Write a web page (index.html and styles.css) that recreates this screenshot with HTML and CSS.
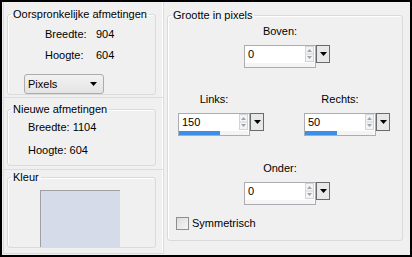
FILE: index.html
```html
<!DOCTYPE html>
<html>
<head>
<meta charset="utf-8">
<link rel="stylesheet" href="styles.css">
</head>
<body>
<div class="dialog">
  <div class="left">
    <div class="panel p1">
      <fieldset class="group g1">
        <legend>Oorspronkelijke afmetingen</legend>
        <div class="dims">
          <span>Breedte:</span><span>904</span>
          <span>Hoogte:</span><span>604</span>
        </div>
        <div class="combo"><span>Pixels</span>
          <svg width="7" height="4" viewBox="0 0 7 4"><path d="M0 0h7L3.5 4z" fill="#000"/></svg>
        </div>
      </fieldset>
    </div>
    <div class="panel p2">
      <fieldset class="group g2">
        <legend>Nieuwe afmetingen</legend>
        <div class="line l1">Breedte: 1104</div>
        <div class="line l2">Hoogte: 604</div>
      </fieldset>
    </div>
    <div class="panel p3">
      <fieldset class="group g3">
        <legend>Kleur</legend>
        <div class="swatch"></div>
      </fieldset>
    </div>
  </div>
  <div class="right">
    <fieldset class="group g4">
      <legend>Grootte in pixels</legend>
      <div class="cell boven">
        <div class="lbl">Boven:</div>
        <div class="spin">
          <div class="field">
            <div class="top"><span class="val">0</span>
              <span class="arrows"><svg width="9" height="16" viewBox="0 0 9 16"><rect x="0.5" y="0.5" width="8" height="15" fill="#f4f4f4" stroke="#d4d4d4"/><path d="M2 6h5L4.5 3z M2 10h5l-2.5 3z" fill="#9aa6b4"/><path d="M1 8h7" stroke="#d4d4d4"/></svg></span>
            </div>
            <div class="bar"></div>
          </div>
          <div class="drop"><svg width="7" height="4" viewBox="0 0 7 4"><path d="M0 0h7L3.5 4z" fill="#000"/></svg></div>
        </div>
      </div>
      <div class="pair">
        <div class="cell">
          <div class="lbl">Links:</div>
          <div class="spin">
            <div class="field">
              <div class="top"><span class="val">150</span>
                <span class="arrows"><svg width="9" height="16" viewBox="0 0 9 16"><rect x="0.5" y="0.5" width="8" height="15" fill="#f4f4f4" stroke="#d4d4d4"/><path d="M2 6h5L4.5 3z M2 10h5l-2.5 3z" fill="#9aa6b4"/><path d="M1 8h7" stroke="#d4d4d4"/></svg></span>
              </div>
              <div class="bar"><div class="fill" style="width:41px"></div></div>
            </div>
            <div class="drop"><svg width="7" height="4" viewBox="0 0 7 4"><path d="M0 0h7L3.5 4z" fill="#000"/></svg></div>
          </div>
        </div>
        <div class="cell">
          <div class="lbl">Rechts:</div>
          <div class="spin">
            <div class="field">
              <div class="top"><span class="val">50</span>
                <span class="arrows"><svg width="9" height="16" viewBox="0 0 9 16"><rect x="0.5" y="0.5" width="8" height="15" fill="#f4f4f4" stroke="#d4d4d4"/><path d="M2 6h5L4.5 3z M2 10h5l-2.5 3z" fill="#9aa6b4"/><path d="M1 8h7" stroke="#d4d4d4"/></svg></span>
              </div>
              <div class="bar"><div class="fill" style="width:32px"></div></div>
            </div>
            <div class="drop"><svg width="7" height="4" viewBox="0 0 7 4"><path d="M0 0h7L3.5 4z" fill="#000"/></svg></div>
          </div>
        </div>
      </div>
      <div class="cell onder">
        <div class="lbl">Onder:</div>
        <div class="spin">
          <div class="field">
            <div class="top"><span class="val">0</span>
              <span class="arrows"><svg width="9" height="16" viewBox="0 0 9 16"><rect x="0.5" y="0.5" width="8" height="15" fill="#f4f4f4" stroke="#d4d4d4"/><path d="M2 6h5L4.5 3z M2 10h5l-2.5 3z" fill="#9aa6b4"/><path d="M1 8h7" stroke="#d4d4d4"/></svg></span>
            </div>
            <div class="bar"></div>
          </div>
          <div class="drop"><svg width="7" height="4" viewBox="0 0 7 4"><path d="M0 0h7L3.5 4z" fill="#000"/></svg></div>
        </div>
      </div>
      <label class="check"><span class="box"></span>Symmetrisch</label>
    </fieldset>
  </div>
</div>
</body>
</html>
```
FILE: styles.css
```css
html, body { margin: 0; padding: 0; }
body {
  width: 412px; height: 257px; overflow: hidden;
  font-family: "Liberation Sans", Arial, sans-serif;
  font-size: 11px; color: #000;
}
.dialog {
  width: 412px; height: 257px; box-sizing: border-box;
  border: 2px solid #000; background: #f0f0f0;
  display: flex; padding: 0 2px 1px 1px;
}
.left { width: 161px; display: flex; flex-direction: column; }
.panel {
  box-sizing: border-box;
  border: 1px solid #dcdcdc; border-top: none;
  box-shadow: inset -1px 0 0 #fff;
  padding: 0 7px 0 3px;
}
.p1 { height: 96px; padding-top: 6px; }
.p2 { height: 72px; padding-top: 5px; }
.p3 { flex: 1; padding-top: 1px; }
fieldset.group {
  margin: 0; padding: 0; min-width: 0;
  border: 1px solid #dadada; border-radius: 3px;
  box-shadow: inset 1px 1px 0 #fff;
}
legend { padding: 0 2px; margin-left: 3px; line-height: 13px; }
.g1 { height: 87px; box-sizing: border-box; }
.dims {
  display: grid; grid-template-columns: 51px auto;
  padding-left: 37px; row-gap: 8px; line-height: 13px; margin-top: 7px;
}
.combo {
  margin: 12px 0 0 16px; width: 80px; height: 20px; box-sizing: border-box;
  border: 1px solid #acacac; border-radius: 3px;
  background: linear-gradient(#f2f2f2, #e4e4e4);
  display: flex; align-items: center; justify-content: space-between;
  padding: 0 6px 0 3px;
}
.g2 { height: 63px; box-sizing: border-box; }
.line { line-height: 13px; padding-left: 20px; }
.l1 { margin-top: 5px; }
.l2 { margin-top: 10px; }
.g3 { height: 77px; box-sizing: border-box; }
.swatch {
  width: 80px; height: 57px; margin: 6px 0 0 32px;
  background: #d6dbe9; border-top: 1px solid #a0a0a0; border-left: 1px solid #a0a0a0;
  box-sizing: border-box;
}
.right { flex: 1; padding: 7px 5px 0 3px; box-sizing: border-box; }
.g4 { height: 232px; box-sizing: border-box; }
.cell { display: flex; flex-direction: column; width: 86px; }
.lbl { line-height: 13px; text-align: center; width: 72px; }
.boven { margin: 3px 0 0 76px; }
.spin { display: flex; height: 23px; margin-top: 7px; }
.field {
  width: 72px; box-sizing: border-box; border: 1px solid #abadb3;
  background: #fff; display: flex; flex-direction: column;
}
.top { display: flex; justify-content: space-between; height: 17px; }
.val { padding: 2px 0 0 3px; line-height: 13px; }
.arrows { padding: 0 1px 0 0; display: flex; }
.bar { height: 4px; background: #f4f4f4; margin: 0 1px 0 0; }
.fill { height: 4px; background: #3c8fe8; }
.drop {
  width: 14px; height: 18px; box-sizing: border-box;
  border: 1px solid #6a6a6a; background: #e8e8e8;
  display: flex; align-items: center; justify-content: center;
}
.pair { display: flex; gap: 40px; margin: 25px 0 0 10px; }
.pair .cell { width: 86px; }
.onder { margin: 26px 0 0 76px; }
.check { display: flex; align-items: center; margin: 12px 0 0 8px; line-height: 13px; }
.box {
  width: 13px; height: 13px; box-sizing: border-box;
  border: 1px solid #8e8f8f; background: linear-gradient(135deg, #dcdcdc, #f6f6f6);
  margin-right: 3px;
}
```
